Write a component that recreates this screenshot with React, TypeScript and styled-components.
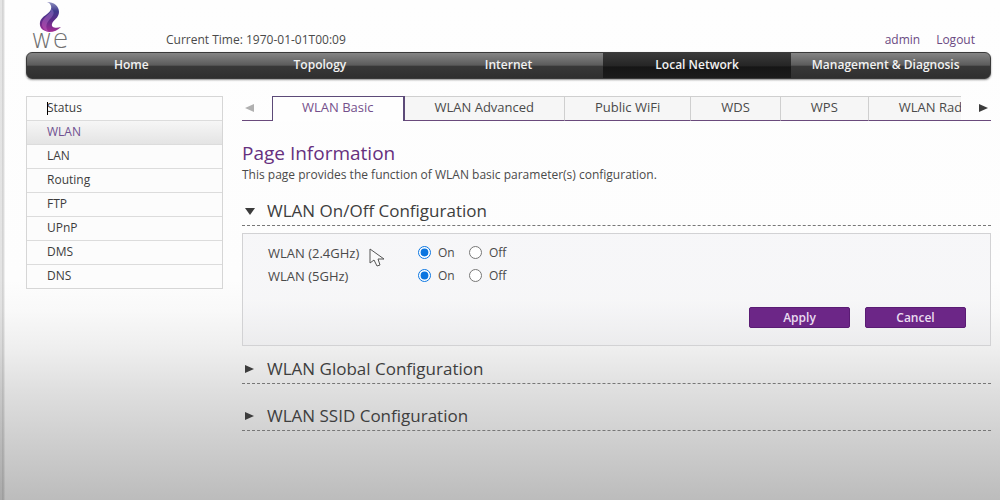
import React, { useState } from 'react';
import styled, { createGlobalStyle, css } from 'styled-components';

const GlobalStyle = createGlobalStyle`
  *, *::before, *::after { box-sizing: border-box; }
  body {
    margin: 0;
    font-family: 'Open Sans', 'Noto Sans', sans-serif;
    font-size: 12px;
    line-height: 16px;
    color: #4a4a4a;
  }
  button { font: inherit; color: inherit; border: 0; padding: 0; background: none; cursor: pointer; }
  a { text-decoration: none; }
`;

const Page = styled.div`
  min-height: 100vh;
  padding: 0 9px 24px 26px;
  background:
    linear-gradient(90deg, rgba(0, 0, 0, 0.1) 2px, rgba(0, 0, 0, 0.18) 2px, rgba(0, 0, 0, 0.12) 4px, transparent 5px),
    linear-gradient(
      #fefefe 0%, #fdfdfd 56%, #f9f9f9 62%, #eeeeee 70%, #dfdfdf 78%, #cfcfcf 88%, #bcbcbc 100%
    );
`;

const Header = styled.header`
  display: flex;
  align-items: flex-end;
  height: 52px;
  padding-bottom: 4px;
`;

const Logo = styled.a`
  display: flex;
  flex-direction: column;
  align-items: center;
  width: 48px;
  margin-right: 92px;
  padding-bottom: 2px;
`;

const Wordmark = styled.span`
  font-family: 'DejaVu Sans', sans-serif;
  font-weight: 200;
  font-size: 26px;
  line-height: 14px;
  color: #707070;
`;

const Account = styled.div`
  display: flex;
  gap: 16px;
  margin-left: auto;
  padding-right: 16px;
`;

const AccountLink = styled.a`
  color: #6b4a82;
`;

const Nav = styled.nav`
  display: flex;
  height: 27px;
  padding: 0 10px;
  border: 1px solid #3a3a3a;
  border-radius: 6px;
  background: linear-gradient(#858585, #5c5c5c 48%, #383838 54%, #2f2f2f);
  box-shadow: 0 1px 2px rgba(0, 0, 0, 0.45);
`;

const NavLink = styled.a<{ $active?: boolean }>`
  flex: 1 1 0;
  line-height: 24px;
  text-align: center;
  white-space: nowrap;
  font-weight: 600;
  color: #f2f2f2;
  ${p => p.$active && css`background: linear-gradient(#3a3a3a, #262626 50%, #161616 56%, #1b1b1b);`}
`;

const Body = styled.div`
  display: flex;
  align-items: flex-start;
  gap: 19px;
  margin-top: 17px;
`;

const Sidebar = styled.nav`
  flex: 0 0 197px;
  border: 1px solid #d6d6d6;
`;

const SideLink = styled.a<{ $active?: boolean }>`
  position: relative;
  display: block;
  height: 24px;
  padding-left: 20px;
  line-height: 22px;
  color: #3c3c3c;
  background: #fcfcfc;
  border-bottom: 1px solid #dcdcdc;
  &:last-child { border-bottom: 0; height: 23px; }
  ${p => p.$active && css`
    color: #6f5090;
    background: linear-gradient(#f6f6f6, #e4e4e4);
  `}
`;

const Caret = styled.span`
  position: absolute;
  left: 20px;
  top: 5px;
  width: 1px;
  height: 13px;
  background: #000;
`;

const Main = styled.main`
  flex: 1;
  min-width: 0;
`;

const TabBar = styled.div`
  display: flex;
  height: 25px;
`;

const Scroller = styled.button`
  flex: 0 0 30px;
  display: flex;
  align-items: center;
  padding-left: 3px;
  border-bottom: 1px solid #6a4a7c;
  &:last-child { padding-left: 18px; }
`;

const TabStrip = styled.div`
  display: flex;
  flex: 1;
  min-width: 0;
  overflow: hidden;
`;

const Tab = styled.button<{ $active?: boolean }>`
  flex: none;
  display: flex;
  padding: 0 30px;
  font-size: 13px;
  line-height: 21px;
  white-space: nowrap;
  background: #f6f6f6;
  border-top: 1px solid #cfcfcf;
  border-right: 1px solid #cfcfcf;
  border-bottom: 1px solid #6a4a7c;
  ${p => p.$active && css`
    padding: 0 29px;
    color: #75508c;
    background: #fefefe;
    border: 1px solid #5c4a78;
    border-right-width: 2px;
    border-bottom: 0;
  `}
`;

const Title = styled.h1`
  margin: 22px 0 0;
  font-size: 19px;
  line-height: 20px;
  font-weight: 400;
  color: #66307e;
`;

const Description = styled.p`
  margin: 4px 0 16px;
`;

const Section = styled.section`
  margin-bottom: 20px;
`;

const SectionHeading = styled.h2`
  margin: 0;
  padding-bottom: 2px;
  font-size: 17px;
  font-weight: 400;
  line-height: 24px;
  color: #3e3e3e;
  border-bottom: 1px dashed #777;
`;

const Toggle = styled.button`
  display: flex;
  align-items: center;
  width: 100%;
  gap: 12px;
  padding-left: 3px;
`;

const Panel = styled.form`
  margin: 7px 0 -9px;
  padding: 7px 24px 17px 25px;
  background: linear-gradient(rgba(246, 246, 248, 0.9), rgba(245, 245, 247, 0.8) 60%, rgba(234, 234, 236, 0.7));
  border: 1px solid #d2d2d4;
`;

const Field = styled.div`
  position: relative;
  display: flex;
  align-items: center;
  height: 23px;
`;

const FieldName = styled.span`
  width: 150px;
  font-size: 13px;
`;

const Option = styled.label`
  display: flex;
  align-items: center;
  gap: 7px;
  width: 51px;
`;

const Radio = styled.input`
  width: 13px;
  height: 13px;
  margin: 0;
  accent-color: #0a75e0;
`;

const Pointer = styled.svg`
  position: absolute;
  left: 101px;
  top: 7px;
`;

const Actions = styled.div`
  display: flex;
  justify-content: flex-end;
  gap: 15px;
  margin-top: 20px;
`;

const ActionButton = styled.button`
  width: 101px;
  height: 21px;
  font-weight: 600;
  line-height: 18px;
  color: #eadcf0;
  background: #6c2687;
  border: 1px solid #5a1c74;
  border-radius: 2px;
`;

type Direction = 'left' | 'right' | 'down';

const arrowPoints: Record<Direction, string> = {
  left: '9,1 9,9 0,5',
  right: '0,1 0,9 9,5',
  down: '0,2 10,2 5,9',
};

function Arrow({ direction, color = '#3c3c3c' }: { direction: Direction; color?: string }) {
  return (
    <svg width="10" height="10" viewBox="0 0 10 10" aria-hidden="true">
      <polygon points={arrowPoints[direction]} fill={color} />
    </svg>
  );
}

function Swoosh() {
  return (
    <svg width="23" height="30" viewBox="0 0 23 30" aria-hidden="true">
      <defs>
        <linearGradient id="swoosh" x1="0" y1="0" x2="0" y2="1">
          <stop offset="0" stopColor="#8f90c0" />
          <stop offset="0.3" stopColor="#3f3a8c" />
          <stop offset="0.6" stopColor="#5c2c8a" />
          <stop offset="1" stopColor="#a22c94" />
        </linearGradient>
        <linearGradient id="shine" x1="0" y1="1" x2="1" y2="0">
          <stop offset="0" stopColor="#c84fb4" />
          <stop offset="1" stopColor="#7d6cc0" />
        </linearGradient>
      </defs>
      <path
        d="M8 0C15 0 20 4 20 10C20 16 14 18 13 22C12 25 16 27 22 25C19 28 15 30 10 30C4 29 0 26 1 20C2 14 11 12 12 7C13 4 11 1 8 0Z"
        fill="url(#swoosh)"
      />
      <path d="M12 7C13 12 3 15 3 22C3 26 6 29 10 30C5 25 8 20 12 16C15 13 16 9 12 7Z" fill="url(#shine)" opacity="0.6" />
    </svg>
  );
}

const navItems = ['Home', 'Topology', 'Internet', 'Local Network', 'Management & Diagnosis'];
const sideItems = ['Status', 'WLAN', 'LAN', 'Routing', 'FTP', 'UPnP', 'DMS', 'DNS'];
const tabs = ['WLAN Basic', 'WLAN Advanced', 'Public WiFi', 'WDS', 'WPS', 'WLAN Radio'];
const bands = ['2.4GHz', '5GHz'];

function Collapsible({ title, initial = false, children }: { title: string; initial?: boolean; children?: React.ReactNode }) {
  const [open, setOpen] = useState(initial);
  return (
    <Section>
      <SectionHeading>
        <Toggle type="button" aria-expanded={open} onClick={() => setOpen(!open)}>
          <Arrow direction={open ? 'down' : 'right'} />
          {title}
        </Toggle>
      </SectionHeading>
      {open && children}
    </Section>
  );
}

export default function App() {
  const [tab, setTab] = useState('WLAN Basic');
  return (
    <>
      <GlobalStyle />
      <Page>
        <Header>
          <Logo href="#">
            <Swoosh />
            <Wordmark>we</Wordmark>
          </Logo>
          <span>Current Time: 1970-01-01T00:09</span>
          <Account>
            <AccountLink href="#">admin</AccountLink>
            <AccountLink href="#">Logout</AccountLink>
          </Account>
        </Header>
        <Nav>
          {navItems.map(item => (
            <NavLink key={item} href="#" $active={item === 'Local Network'}>{item}</NavLink>
          ))}
        </Nav>
        <Body>
          <Sidebar>
            {sideItems.map(item => (
              <SideLink key={item} href="#" $active={item === 'WLAN'}>
                {item === 'Status' && <Caret />}
                {item}
              </SideLink>
            ))}
          </Sidebar>
          <Main>
            <TabBar>
              <Scroller type="button" aria-label="Previous tabs"><Arrow direction="left" color="#b0b0b0" /></Scroller>
              <TabStrip>
                {tabs.map(name => (
                  <Tab key={name} type="button" $active={name === tab} onClick={() => setTab(name)}>{name}</Tab>
                ))}
              </TabStrip>
              <Scroller type="button" aria-label="Next tabs"><Arrow direction="right" /></Scroller>
            </TabBar>
            <Title>Page Information</Title>
            <Description>This page provides the function of WLAN basic parameter(s) configuration.</Description>
            <Collapsible title="WLAN On/Off Configuration" initial>
              <Panel onSubmit={e => e.preventDefault()}>
                {bands.map((band, i) => (
                  <Field key={band} role="radiogroup" aria-labelledby={`band-${i}`}>
                    <FieldName id={`band-${i}`}>WLAN ({band})</FieldName>
                    <Option><Radio type="radio" name={band} defaultChecked />On</Option>
                    <Option><Radio type="radio" name={band} />Off</Option>
                    {i === 0 && (
                      <Pointer width="16" height="19" viewBox="0 0 16 19" aria-hidden="true">
                        <path d="M1 1V15L5 12L8 18L11 17L9 11H15Z" fill="#fafafa" stroke="#555" />
                      </Pointer>
                    )}
                  </Field>
                ))}
                <Actions>
                  <ActionButton type="submit">Apply</ActionButton>
                  <ActionButton type="reset">Cancel</ActionButton>
                </Actions>
              </Panel>
            </Collapsible>
            <Collapsible title="WLAN Global Configuration" />
            <Collapsible title="WLAN SSID Configuration" />
          </Main>
        </Body>
      </Page>
    </>
  );
}
